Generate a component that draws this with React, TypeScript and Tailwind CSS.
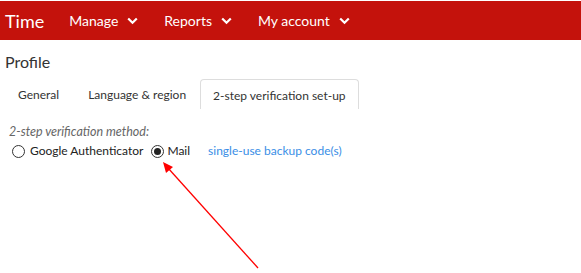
const menu = ['Manage', 'Reports', 'My account'];

function Chevron() {
  return (
    <svg className="ml-[9px]" width="11" height="8" viewBox="0 0 11 8">
      <polyline points="1.2,1.5 5.5,5.8 9.8,1.5" fill="none" stroke="white" strokeWidth="2.2" />
    </svg>
  );
}

export default function App() {
  return (
    <div className="relative w-[581px] h-[273px] bg-white font-['Lato','Liberation_Sans',sans-serif] text-[#333]">
      {/* Barra superior */}
      <div className="mt-px h-[39px] bg-[#c4120c] flex items-center text-white">
        <span className="ml-[5px] text-[18px] leading-none">Time</span>
        <nav className="flex ml-[25px]">
          {menu.map((item) => (
            <div key={item} className="flex items-center mr-[26px] text-[14px]">
              <span>{item}</span>
              <Chevron />
            </div>
          ))}
        </nav>
      </div>

      {/* Perfil */}
      <div className="px-[5px]">
        <h1 className="mt-[12px] text-[16px] leading-[20px] text-[#333]">Profile</h1>
        <div className="mt-[7px] flex text-[12px] text-[#333]">
          <div className="pl-[13px] pr-[15px] pt-[2px] h-[30px] flex items-center">General</div>
          <div className="px-[14px] pt-[2px] h-[30px] flex items-center">Language &amp; region</div>
          <div className="px-[12px] pt-[2px] h-[30px] flex items-center border border-b-0 border-[#dddddd] rounded-t-[4px]">
            2-step verification set-up
          </div>
        </div>

        <div className="mt-[15px] px-[4px]">
          <p className="italic text-[12.5px] text-[#666] leading-[16px]">2-step verification method:</p>
          <div className="flex items-center mt-[2px] text-[12px] text-[#222]">
            <span className="w-[13px] h-[13px] rounded-full border border-[#333] ml-[3px]" />
            <span className="ml-[5px]">Google Authenticator</span>
            <span className="ml-[8px] w-[13px] h-[13px] rounded-full border border-[#333] flex items-center justify-center">
              <span className="w-[7px] h-[7px] rounded-full bg-[#222]" />
            </span>
            <span className="ml-[3px]">Mail</span>
            <a className="ml-[18px] text-[#3a8ee6]">single-use backup code(s)</a>
          </div>
        </div>
      </div>

      {/* Flecha */}
      <svg className="absolute left-0 top-0 pointer-events-none" width="581" height="273">
        <line x1="258" y1="267" x2="168" y2="167" stroke="#ff0000" strokeWidth="1.3" />
        <polygon points="163,161 166,172 173,166" fill="#ff0000" />
      </svg>
    </div>
  );
}
